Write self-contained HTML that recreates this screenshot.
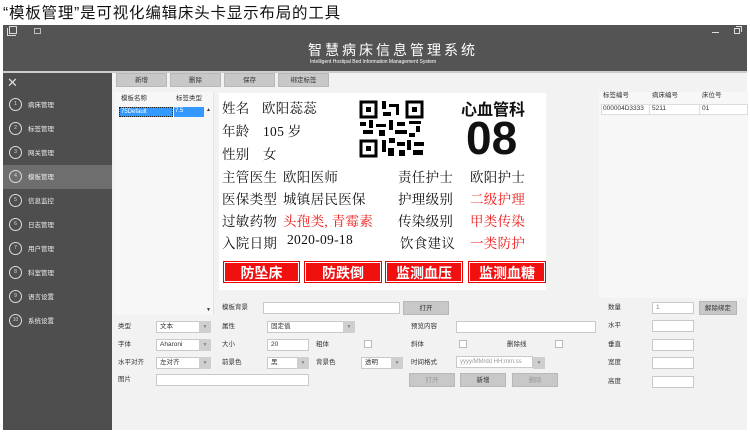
<!DOCTYPE html><html><head><meta charset="utf-8"><style>
*{margin:0;padding:0;box-sizing:border-box}
body{width:750px;height:435px;background:#fff;position:relative;overflow:hidden;font-family:"Liberation Sans","Noto Sans CJK SC",sans-serif;}
.a{position:absolute}
.s{font-size:6.5px;color:#333;white-space:nowrap;line-height:12px}
.btn{position:absolute;background:#c8c8c8;border:1px solid #b8b8b8;font-size:6.5px;color:#333;text-align:center;line-height:13px;height:14px}
.box{position:absolute;background:#fff;border:1px solid #c9c9c9;height:12px;font-size:6.5px;line-height:10px;padding-left:3px;color:#333}
.dd{position:absolute;width:12px;height:12px;background:#cfcfcf;color:#888;font-size:5px;text-align:center;line-height:12px}
.cb{position:absolute;width:8px;height:8px;border:1px solid #bbb;background:#fff}
.nav{position:absolute;left:3px;width:109px;height:24px}
.nav i{position:absolute;left:6px;top:5px;width:13px;height:13px;border:1px solid #ddd;border-radius:50%;font-style:normal;font-size:5px;color:#ddd;text-align:center;line-height:11px}
.nav span{position:absolute;left:25px;top:6px;font-size:6.5px;color:#eee}
.c{position:absolute;font-family:"Liberation Serif","Noto Serif CJK SC",serif;font-size:13.5px;color:#111;white-space:nowrap;letter-spacing:0.3px}
.r{color:#f01818}
.rb{position:absolute;top:262px;height:20px;background:#f01010;color:#fff;font-weight:bold;font-size:14px;text-align:center;line-height:20px;border:1px solid #fff;outline:1px solid #e00}
</style></head><body>
<div class="a" style="left:3px;top:1px;font-size:15.5px;letter-spacing:0.8px;color:#111">“模板管理”是可视化编辑床头卡显示布局的工具</div>
<div class="a" style="left:3px;top:25px;width:744px;height:46px;background:#545454"></div>
<div class="a" style="left:7px;top:28px;width:9px;height:8px;border:1px solid #ddd;border-top:none;border-right:none"></div>
<div class="a" style="left:9px;top:26px;width:8px;height:8px;border:1px solid #ddd"></div>
<div class="a" style="left:34px;top:28px;width:7px;height:6px;border:1px solid #bbb"></div>
<div class="a" style="left:712px;top:32px;width:7px;height:1px;background:#ddd"></div>
<div class="a" style="left:734px;top:28px;width:6px;height:6px;border:1px solid #ddd"></div>
<div class="a" style="left:736px;top:26px;width:6px;height:6px;border:1px solid #ddd;border-left:none;border-bottom:none"></div>
<div class="a" style="left:308px;top:40px;font-size:14px;letter-spacing:3px;color:#fff">智慧病床信息管理系统</div>
<div class="a" style="left:310px;top:59px;font-size:5px;color:#fff">Intelligent Hostipal Bed Information Management System</div>
<div class="a" style="left:3px;top:71px;width:744px;height:2px;background:#ccc"></div>
<div class="a" style="left:3px;top:73px;width:109px;height:357px;background:#4e4e4e"></div>
<div class="a" style="left:112px;top:73px;width:635px;height:357px;background:#f2f2f2"></div>
<div class="a" style="left:7px;top:76px;font-size:13px;color:#ddd;line-height:13px">✕</div>
<div class="nav" style="top:93px"><i>1</i><span>病床管理</span></div>
<div class="nav" style="top:117px"><i>2</i><span>标签管理</span></div>
<div class="nav" style="top:141px"><i>3</i><span>网关管理</span></div>
<div class="nav" style="top:165px;background:#6e6e6e"><i>4</i><span>模板管理</span></div>
<div class="nav" style="top:189px"><i>5</i><span>信息监控</span></div>
<div class="nav" style="top:213px"><i>6</i><span>日志管理</span></div>
<div class="nav" style="top:237px"><i>7</i><span>用户管理</span></div>
<div class="nav" style="top:261px"><i>8</i><span>科室管理</span></div>
<div class="nav" style="top:285px"><i>9</i><span>语言设置</span></div>
<div class="nav" style="top:309px"><i>10</i><span>系统设置</span></div>
<div class="btn" style="left:116px;top:73px;width:51px">新增</div>
<div class="btn" style="left:170px;top:73px;width:51px">删除</div>
<div class="btn" style="left:224px;top:73px;width:51px">保存</div>
<div class="btn" style="left:278px;top:73px;width:51px">绑定标签</div>
<div class="a" style="left:115px;top:92px;width:99px;height:223px;background:#f7f7f7;border-right:1px solid #e4e4e4"></div>
<div class="a s" style="left:121px;top:93px">模板名称</div><div class="a s" style="left:176px;top:93px">标签类型</div>
<div class="a" style="left:119px;top:107px;width:54px;height:10px;background:#3399ff;border:1px dotted #222;font-size:6px;color:#fff;padding-left:1px;line-height:8px">75Default</div>
<div class="a" style="left:174px;top:107px;width:30px;height:10px;background:#3399ff;font-size:6px;color:#fff;padding-left:1px;line-height:9px">7.5</div>
<div class="a s" style="left:206px;top:106px;font-size:5px;line-height:8px">▲</div>
<div class="a s" style="left:206px;top:306px;font-size:5px;line-height:8px">▼</div>
<div class="a" style="left:219px;top:93px;width:327px;height:197px;background:#fff"></div>
<div class="c" style="left:222px;top:97px">姓名</div><div class="c" style="left:262px;top:97px">欧阳蕊蕊</div>
<div class="c" style="left:222px;top:120px">年龄</div><div class="c" style="left:263px;top:120px">105 岁</div>
<div class="c" style="left:222px;top:143px">性别</div><div class="c" style="left:263px;top:143px">女</div>
<div class="c" style="left:222px;top:166px">主管医生</div><div class="c" style="left:283px;top:166px">欧阳医师</div>
<div class="c" style="left:222px;top:188px">医保类型</div><div class="c" style="left:283px;top:188px">城镇居民医保</div>
<div class="c" style="left:222px;top:210px">过敏药物</div><div class="c r" style="left:283px;top:210px">头孢类, 青霉素</div>
<div class="c" style="left:222px;top:232px">入院日期</div><div class="c" style="left:287px;top:232px">2020-09-18</div>
<div class="c" style="left:398px;top:166px">责任护士</div><div class="c" style="left:470px;top:166px">欧阳护士</div>
<div class="c" style="left:398px;top:188px">护理级别</div><div class="c r" style="left:470px;top:188px">二级护理</div>
<div class="c" style="left:398px;top:210px">传染级别</div><div class="c r" style="left:470px;top:210px">甲类传染</div>
<div class="c" style="left:400px;top:232px">饮食建议</div><div class="c r" style="left:470px;top:232px">一类防护</div>
<div class="a" style="left:461px;top:96px;font-size:16px;font-weight:bold;color:#111">心血管科</div>
<div class="a" style="left:466px;top:114px;font-size:46px;font-weight:bold;color:#111;line-height:48px">08</div>
<svg class="a" style="left:359px;top:100px" width="67" height="58" viewBox="0 0 67 58">
<g fill="none" stroke="#000" stroke-width="3"><rect x="2" y="2" width="15" height="15"/><rect x="48" y="2" width="15" height="15"/><rect x="2" y="41" width="15" height="15"/></g>
<g fill="#000"><rect x="7" y="7" width="5" height="5"/><rect x="53" y="7" width="5" height="5"/><rect x="7" y="46" width="5" height="5"/>
<rect x="23" y="1" width="4" height="8"/><rect x="30" y="4" width="10" height="3"/><rect x="37" y="7" width="3" height="8"/><rect x="24" y="12" width="8" height="4"/>
<rect x="1" y="22" width="6" height="4"/><rect x="10" y="20" width="4" height="8"/><rect x="17" y="24" width="10" height="3"/><rect x="30" y="20" width="4" height="10"/><rect x="38" y="22" width="8" height="4"/><rect x="50" y="21" width="12" height="3"/><rect x="57" y="26" width="4" height="6"/>
<rect x="4" y="30" width="10" height="4"/><rect x="20" y="30" width="6" height="6"/><rect x="36" y="30" width="12" height="4"/><rect x="50" y="33" width="6" height="4"/>
<rect x="23" y="40" width="4" height="12"/><rect x="30" y="38" width="6" height="5"/><rect x="38" y="42" width="8" height="4"/><rect x="48" y="40" width="4" height="10"/><rect x="55" y="42" width="10" height="4"/><rect x="29" y="48" width="6" height="8"/><rect x="40" y="50" width="6" height="6"/><rect x="54" y="50" width="10" height="5"/></g></svg>
<div class="rb" style="left:224px;width:75px">防坠床</div>
<div class="rb" style="left:305px;width:76px">防跌倒</div>
<div class="rb" style="left:386px;width:76px">监测血压</div>
<div class="rb" style="left:469px;width:76px">监测血糖</div>
<div class="a" style="left:599px;top:92px;width:149px;height:206px;background:#f7f7f7"></div>
<div class="a s" style="left:603px;top:90px">标签编号</div><div class="a s" style="left:652px;top:90px">病床编号</div><div class="a s" style="left:702px;top:90px">床位号</div>
<div class="a" style="left:601px;top:104px;width:147px;height:11px;background:#fff;border:1px solid #ddd"></div>
<div class="a s" style="left:603px;top:103px">000004D3333</div><div class="a s" style="left:652px;top:103px">5211</div><div class="a s" style="left:702px;top:103px">01</div>
<div class="a" style="left:649px;top:104px;width:1px;height:11px;background:#ddd"></div><div class="a" style="left:699px;top:104px;width:1px;height:11px;background:#ddd"></div>
<div class="a s" style="left:222px;top:302px">模板背景</div><div class="box" style="left:263px;top:302px;width:137px"></div><div class="btn" style="left:403px;top:301px;width:46px">打开</div>
<div class="a s" style="left:118px;top:321px">类型</div><div class="box" style="left:156px;top:321px;width:55px">文本</div><div class="dd" style="left:199px;top:321px">▼</div>
<div class="a s" style="left:222px;top:321px">属性</div><div class="box" style="left:267px;top:321px;width:88px">固定值</div><div class="dd" style="left:343px;top:321px">▼</div>
<div class="a s" style="left:411px;top:321px">预览内容</div><div class="box" style="left:456px;top:321px;width:140px"></div>
<div class="a s" style="left:118px;top:339px">字体</div><div class="box" style="left:156px;top:339px;width:55px">Aharoni</div><div class="dd" style="left:199px;top:339px">▼</div>
<div class="a s" style="left:222px;top:339px">大小</div><div class="box" style="left:267px;top:339px;width:42px">20</div>
<div class="a s" style="left:316px;top:339px">粗体</div><div class="cb" style="left:364px;top:340px"></div>
<div class="a s" style="left:411px;top:339px">斜体</div><div class="cb" style="left:459px;top:340px"></div>
<div class="a s" style="left:507px;top:339px">删除线</div><div class="cb" style="left:555px;top:340px"></div>
<div class="a s" style="left:118px;top:357px">水平对齐</div><div class="box" style="left:156px;top:357px;width:55px">左对齐</div><div class="dd" style="left:199px;top:357px">▼</div>
<div class="a s" style="left:222px;top:357px">前景色</div><div class="box" style="left:267px;top:357px;width:42px">黑</div><div class="dd" style="left:297px;top:357px">▼</div>
<div class="a s" style="left:316px;top:357px">背景色</div><div class="box" style="left:361px;top:357px;width:42px">透明</div><div class="dd" style="left:391px;top:357px">▼</div>
<div class="a s" style="left:411px;top:357px">时间格式</div><div class="box" style="left:456px;top:356px;width:77px;color:#999;font-size:6px">yyyy/MM/dd HH:mm:ss</div><div class="dd" style="left:533px;top:357px">▼</div>
<div class="a s" style="left:118px;top:374px">图片</div><div class="box" style="left:156px;top:374px;width:153px"></div>
<div class="btn" style="left:409px;top:373px;width:46px;color:#999">打开</div>
<div class="btn" style="left:460px;top:373px;width:46px">新增</div>
<div class="btn" style="left:512px;top:373px;width:46px;color:#999">删除</div>
<div class="a s" style="left:608px;top:302px">数量</div><div class="box" style="left:652px;top:302px;width:42px;color:#888">1</div><div class="btn" style="left:699px;top:301px;width:38px">解除绑定</div>
<div class="a s" style="left:608px;top:320px">水平</div><div class="box" style="left:652px;top:320px;width:42px"></div>
<div class="a s" style="left:608px;top:339px">垂直</div><div class="box" style="left:652px;top:339px;width:42px"></div>
<div class="a s" style="left:608px;top:357px">宽度</div><div class="box" style="left:652px;top:357px;width:42px"></div>
<div class="a s" style="left:608px;top:376px">高度</div><div class="box" style="left:652px;top:376px;width:42px"></div>
</body></html>
